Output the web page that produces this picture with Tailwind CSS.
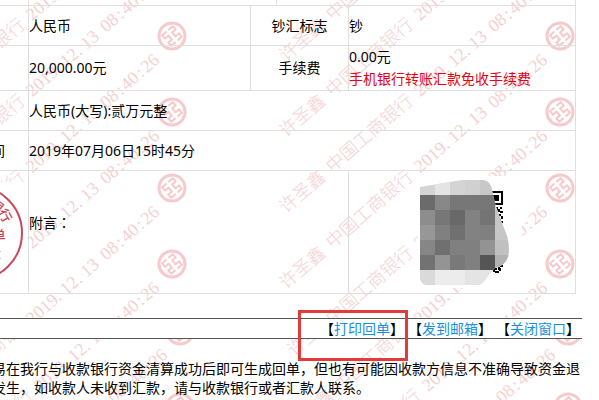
<!DOCTYPE html>
<html lang="zh-CN">
<head>
    <meta charset="UTF-8">
    <meta name="viewport" content="width=device-width, initial-scale=1.0">
    <title>电子回单</title>
    <script src="https://cdn.jsdelivr.net/npm/@tailwindcss/browser@4"></script>
</head>
<body class="bg-white text-black text-sm font-['Noto_Sans','Noto_Sans_CJK_SC',sans-serif] overflow-hidden">

    <!-- Receipt -->
    <section class="relative isolate pb-6 overflow-hidden">

        <!-- Watermark -->
        <svg class="absolute inset-0 -z-10 w-full h-full" aria-hidden="true">
            <defs>
                <g id="mark">
                    <g transform="rotate(-41)" font-size="18" font-weight="300" fill="#f5d0d0" font-family="'Liberation Serif','Noto Sans CJK SC',serif">
                        <text x="0" y="0">许圣鑫</text>
                        <text x="62" y="0">中国工商银行</text>
                        <text y="0"><tspan x="178">2019.</tspan><tspan x="223">12.</tspan><tspan x="250">13</tspan></text>
                        <text y="0"><tspan x="276">08</tspan><tspan x="296">:</tspan><tspan x="303">40</tspan><tspan x="323">:</tspan><tspan x="330">26</tspan></text>
                    </g>
                    <g transform="translate(274 -254) rotate(-41)" fill="none" stroke="#f6c9cb">
                        <circle r="13" stroke-width="3"/>
                        <path d="M-1.2 -7H-7V-2.5H-2.5V2.5H-7V7H-1.2M1.2 -7H7V-2.5H2.5V2.5H7V7H1.2" stroke-width="2"/>
                    </g>
                </g>
                <g id="marks">
                    <use href="#mark" y="-14"/>
                    <use href="#mark" y="62"/>
                    <use href="#mark" y="138"/>
                    <use href="#mark" y="214"/>
                    <use href="#mark" y="290"/>
                    <use href="#mark" y="366"/>
                    <use href="#mark" y="442"/>
                    <use href="#mark" y="518"/>
                    <use href="#mark" y="594"/>
                    <use href="#mark" y="670"/>
                </g>
            </defs>
            <use href="#marks" x="286"/>
            <use href="#marks" x="-102"/>
        </svg>

        <div class="flex h-[5px] mr-[23px] border-r border-[#dfdfdf]">
            <div class="w-[29px] border-r border-[#dfdfdf]"></div>
            <div class="w-[248px] border-r border-[#dfdfdf]"></div>
        </div>

        <div class="-ml-[75px] mr-[23px]">
            <table class="w-full table-fixed border-collapse leading-[22px] [&_td]:border [&_th]:border [&_td]:border-[#dfdfdf] [&_th]:border-[#dfdfdf] [&_th]:font-normal">
                <colgroup>
                    <col class="w-[103px]">
                    <col>
                    <col class="w-[98px]">
                    <col class="w-[227px]">
                </colgroup>
                <tr class="h-[40px]">
                    <td></td>
                    <td>人民币</td>
                    <th>钞汇标志</th>
                    <td>钞</td>
                </tr>
                <tr class="h-[45px]">
                    <td></td>
                    <td>20,000.00元</td>
                    <th>手续费</th>
                    <td>0.00元<br><span class="text-[#e60012]">手机银行转账汇款免收手续费</span></td>
                </tr>
                <tr class="h-[40px]">
                    <td></td>
                    <td colspan="3">人民币(大写):贰万元整</td>
                </tr>
                <tr class="h-[40px]">
                    <th class="pr-[23px] text-right">间</th>
                    <td colspan="3">2019年07月06日15时45分</td>
                </tr>
                <tr class="h-[123px]">
                    <td>
                        <!-- Bank seal -->
                        <svg class="mx-auto block bg-white" width="100" height="100" viewBox="-48 -51 100 100" role="img" aria-label="印章">
                            <circle r="47" fill="none" stroke="#c9485b" stroke-width="2"/>
                            <g fill="#cc4255" font-size="13" font-weight="500" text-anchor="middle">
                                <text transform="rotate(39) translate(0 -30)">银</text>
                                <text transform="rotate(60) translate(0 -30)">行</text>
                                <text x="24" y="7">单</text>
                                <text x="20" y="26" font-size="12">章</text>
                            </g>
                        </svg>
                    </td>
                    <td colspan="2">
                        <div class="-mt-5">附言<span class="font-['Noto_Sans_CJK_TC']" lang="zh-TW">：</span></div>
                    </td>
                    <td class="pl-[69px]">
                        <!-- QR code under a mosaic -->
                        <svg class="block" width="104" height="112" viewBox="418 176 104 112" shape-rendering="crispEdges" role="img" aria-label="二维码">
                            <rect x="418" y="176" width="104" height="112" fill="#fff"/>
                            <path d="M489 191H503V205H489ZM491 193V203H501V193Z" fill="#000" fill-rule="evenodd"/>
                            <path d="M493 195h6v6h-6zM495 207h3v2h-3zM500 207h2v2h-2zM497 209h3v3h-3zM495 212h3v2h-3zM500 211h3v2h-3zM498 214h3v2h-3zM501 216h2v3h-2zM497 217h3v2h-3zM499 219h2v2h-2zM501 221h2v2h-2zM502 225h1v2h-1zM493 268h4v2h-4zM500 265h3v2h-3zM498 267h2v3h-2zM493 270h2v2h-2zM495 271h4v2h-4zM499 268h2v3h-2z"/>
                            <clipPath id="blob">
                                <path d="M420 187L462 180H482Q488 180 491 186L495 203L500 218L507 236Q510 248 508 257Q505 266 495 268L489 274Q484 284 478 285H428Q420 284 420 277Z"/>
                            </clipPath>
                            <g clip-path="url(#blob)">
                                <rect x="420" y="180" width="90" height="105" fill="#d4d4d4"/>
                                <path d="M435 180h15v15h-15z" fill="#e4e4e4"/>
                                <path d="M465 180h15v15h-15z" fill="#d0d0d0"/>
                                <path d="M480 180h15v15h-15z" fill="#c8c8c8"/>
                                <rect x="420" y="195" width="75" height="75" fill="#808080"/>
                                <path d="M420 195h15v15h-15z" fill="#6b6b6b"/>
                                <path d="M435 195h15v15h-15z" fill="#888"/>
                                <path d="M450 195h45v15h-45z" fill="#777"/>
                                <path d="M420 210h15v15h-15z" fill="#8d8d8d"/>
                                <path d="M435 210h15v15h-15z" fill="#777"/>
                                <path d="M450 210h15v15h-15z" fill="#696969"/>
                                <path d="M465 210h15v30h-15z" fill="#828282"/>
                                <path d="M480 210h15v15h-15z" fill="#747474"/>
                                <path d="M420 225h15v15h-15z" fill="#979797"/>
                                <path d="M450 225h15v15h-15z" fill="#707070"/>
                                <path d="M420 240h15v15h-15z" fill="#868686"/>
                                <path d="M435 240h15v15h-15z" fill="#707070"/>
                                <path d="M480 240h15v15h-15z" fill="#939393"/>
                                <path d="M420 255h15v15h-15z" fill="#727272"/>
                                <path d="M435 255h15v15h-15z" fill="#949494"/>
                                <path d="M450 255h15v15h-15z" fill="#797979"/>
                                <path d="M480 255h15v15h-15z" fill="#555"/>
                                <path d="M495 210h15v30h-15z" fill="#c6c6c6"/>
                                <path d="M495 240h15v15h-15z" fill="#c0c0c0"/>
                                <path d="M495 255h15v15h-15z" fill="#b2b2b2"/>
                                <path d="M420 270h15v15h-15z" fill="#dadada"/>
                                <path d="M435 270h30v15h-30z" fill="#ececec"/>
                                <path d="M465 270h30v15h-30z" fill="#e4e4e4"/>
                            </g>
                        </svg>
                    </td>
                </tr>
            </table>
        </div>
    </section>

    <!-- Actions -->
    <nav class="relative mr-[17px] flex h-[21px] items-center justify-end gap-1 border-y border-[#555] bg-white pr-0.5 leading-5">
        <span class="relative">【<a href="#" class="text-[#1690e0]">打印回单</a>】
            <span class="absolute -left-[22px] -top-[9px] h-[51px] w-[110px] border-[3px] border-[#e33b3b]"></span>
        </span>
        <span>【<a href="#" class="text-[#1690e0]">发到邮箱</a>】</span>
        <span>【<a href="#" class="text-[#1690e0]">关闭窗口</a>】</span>
    </nav>

    <!-- Notes -->
    <section class="relative isolate -z-10 overflow-hidden pt-5 pb-5">
        <svg class="absolute inset-0 -z-10 w-full h-full" aria-hidden="true">
            <use href="#marks" x="294" y="-348"/>
            <use href="#marks" x="-94" y="-348"/>
        </svg>
        <p class="-ml-2 whitespace-nowrap leading-[19px]">易在我行与收款银行资金清算成功后即可生成回单，但也有可能因收款方信息不准确导致资金退<br>发生，如收款人未收到汇款，请与收款银行或者汇款人联系。</p>
    </section>

</body>
</html>
